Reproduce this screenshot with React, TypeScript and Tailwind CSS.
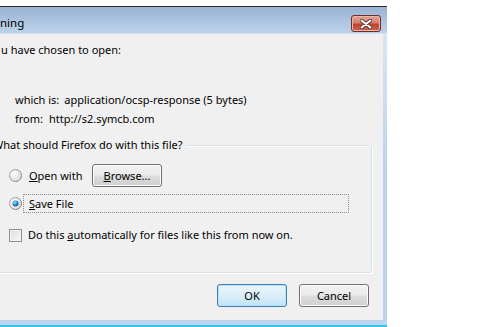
import React from 'react';

const font = { fontFamily: '"Noto Sans", "Liberation Sans", sans-serif' };

const Radio = ({ checked }: { checked?: boolean }) => (
  <svg width="13" height="13" viewBox="0 0 13 13" className="shrink-0">
    <defs>
      <linearGradient id="rb-out" x1="0" y1="0" x2="1" y2="1">
        <stop offset="0" stopColor="#a9a9a9" />
        <stop offset="1" stopColor="#7b7b7b" />
      </linearGradient>
      <radialGradient id="rb-in" cx="0.35" cy="0.35" r="0.8">
        <stop offset="0" stopColor="#ffffff" />
        <stop offset="1" stopColor="#d4d4d4" />
      </radialGradient>
      <radialGradient id="rb-dot" cx="0.4" cy="0.35" r="0.7">
        <stop offset="0" stopColor="#a7e1ff" />
        <stop offset="0.5" stopColor="#2d8fd3" />
        <stop offset="1" stopColor="#0e4f8a" />
      </radialGradient>
    </defs>
    <circle cx="6.5" cy="6.5" r="6" fill="url(#rb-in)" stroke="url(#rb-out)" strokeWidth="1" />
    {checked && <circle cx="6.5" cy="6.5" r="3" fill="url(#rb-dot)" />}
  </svg>
);

const WinButton = ({ children, focused }: { children: React.ReactNode; focused?: boolean }) => (
  <div
    className={`flex h-[23px] w-[70px] items-center justify-center rounded-[3px] border text-black ${
      focused
        ? 'border-[#3c7fb1] shadow-[inset_0_0_0_1px_#b4e3fa] bg-gradient-to-b from-[#eaf6fd] via-[#dbeef9] to-[#bfe3f7]'
        : 'border-[#707070] shadow-[inset_0_0_0_1px_#fcfcfc] bg-[linear-gradient(#f2f2f2_0%,#ebebeb_48%,#dddddd_52%,#cfcfcf_100%)]'
    }`}
  >
    {children}
  </div>
);

const CloseButton = () => (
  <div className="flex h-[17px] w-[30px] items-center justify-center rounded-[3px] border border-[#6a2f2f] bg-[linear-gradient(#e5a495_0%,#d6806f_45%,#c0432d_55%,#cd6551_100%)] shadow-[inset_0_0_0_1px_#eab5a8]">
    <svg width="12" height="10" viewBox="0 0 12 10">
      <path d="M1.5 1.5 L10.5 8.5 M10.5 1.5 L1.5 8.5" stroke="#4b3232" strokeWidth="3.6" strokeLinecap="round" />
      <path d="M1.5 1.5 L10.5 8.5 M10.5 1.5 L1.5 8.5" stroke="#ffffff" strokeWidth="2" strokeLinecap="round" />
    </svg>
  </div>
);

export default function App() {
  return (
    <div className="h-[327px] w-[500px] overflow-hidden bg-white pt-[6px] text-[11px]" style={font}>
      <div className="flex h-[321px] w-[387px] flex-col border-t border-[#2d2d2d]">
        {/* title bar */}
        <div className="flex h-[27px] items-start justify-between border-b border-[#d3e1f0] bg-gradient-to-b from-[#98b3d3] to-[#bed3ea] pr-[6px]">
          <span className="mt-[8px] text-[11.5px] leading-[16px] text-black">ning</span>
          <div className="mt-[8px]">
            <CloseButton />
          </div>
        </div>

        <div className="flex flex-1">
          <div className="flex flex-1 flex-col bg-[#f0f0f0] leading-[16px] text-black">
            <div className="mt-[8px] pl-[1px]">u have chosen to open:</div>

            <div className="mt-[34px] flex pl-[15px]">
              <span>which is:</span>
              <span className="ml-[5px]">application/ocsp-response (5 bytes)</span>
            </div>
            <div className="mt-[3px] flex pl-[15px]">
              <span>from:</span>
              <span className="ml-[6px]">http://s2.symcb.com</span>
            </div>

            {/* group box */}
            <div className="relative -ml-[6px] mt-[18px] h-[128px] w-[378px] rounded-[3px] border border-[#d5dfe5] shadow-[inset_1px_1px_0_#ffffff,1px_1px_0_#ffffff]">
              <span className="absolute -top-[9px] left-[0px] bg-[#f0f0f0] pr-[4px]">
                <span className="-ml-[2px] inline-block">What should Firefox do with this file?</span>
              </span>

              <div className="flex flex-col pl-[14px] pt-[17px]">
                <div className="flex h-[25px] items-center">
                  <Radio />
                  <span className="ml-[7px] w-[63px]">
                    <u>O</u>pen with
                  </span>
                  <WinButton>
                    <span>
                      <u>B</u>rowse...
                    </span>
                  </WinButton>
                </div>
                <div className="mt-[6px] flex h-[19px] items-center">
                  <Radio checked />
                  <div className="ml-[1px] flex h-[19px] w-[326px] items-center border border-dotted border-[#8a8a8a] pl-[5px]">
                    <u>S</u>ave File
                  </div>
                </div>
                <div className="mt-[14px] flex items-center pl-[0px]">
                  <div className="h-[13px] w-[13px] border border-[#8e8f8f] bg-gradient-to-br from-[#dcdcdc] to-[#f8f8f8] shadow-[inset_0_0_0_1px_#f4f4f4]" />
                  <span className="ml-[6px]">
                    Do this <u>a</u>utomatically for files like this from now on.
                  </span>
                </div>
              </div>
            </div>

            <div className="mt-[11px] flex justify-end gap-[12px] pr-[14px]">
              <WinButton focused>OK</WinButton>
              <WinButton>Cancel</WinButton>
            </div>
          </div>
          <div className="w-[4px] bg-gradient-to-b from-[#d9e5f3] via-[#bad2ec] to-[#bad2ec]" />
        </div>

        <div className="h-[5px] bg-[#bdd5ee]" />
        <div className="h-[2px] bg-[#35c2ec]" />
      </div>
    </div>
  );
}
